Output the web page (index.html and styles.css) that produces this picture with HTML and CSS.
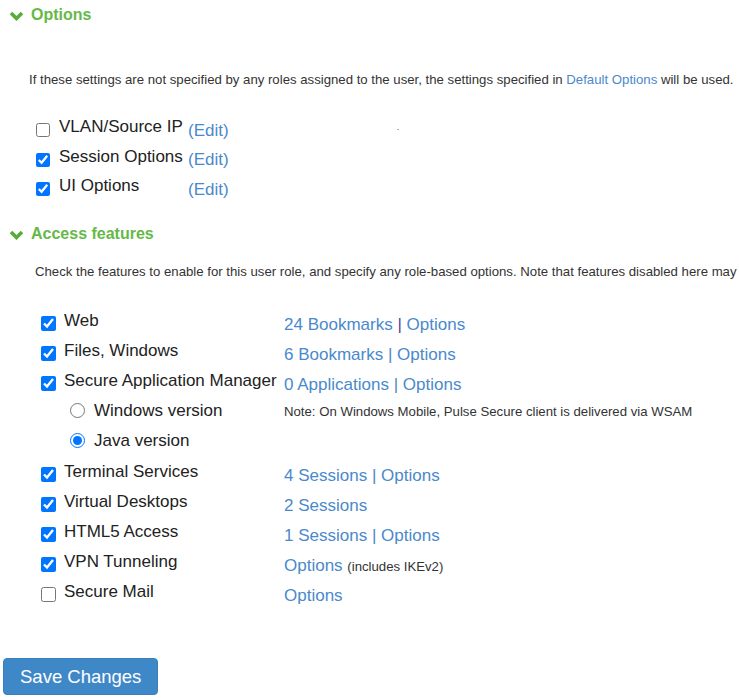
FILE: index.html
```html
<!DOCTYPE html>
<html lang="en">
<head>
<meta charset="utf-8">
<title>Role Options</title>
<link rel="stylesheet" href="styles.css">
</head>
<body>
<div class="page">
  <div class="section-title">
    <svg class="chev" viewBox="0 0 15 10" width="15" height="10"><polyline points="2,2 7.5,7.5 13,2" fill="none" stroke="#5aac3a" stroke-width="3.6" stroke-linejoin="miter"/></svg>
    <span>Options</span>
  </div>
  <p class="note opt-note">If these settings are not specified by any roles assigned to the user, the settings specified in <a href="#" class="link">Default Options</a> will be used.</p>
  <div class="opt-list">
    <div class="opt-row">
      <input type="checkbox" class="cb">
      <span class="opt-label">VLAN/Source IP</span>
      <a href="#" class="link edit">(Edit)</a>
      <span class="stray">.</span>
    </div>
    <div class="opt-row">
      <input type="checkbox" class="cb" checked>
      <span class="opt-label">Session Options</span>
      <a href="#" class="link edit">(Edit)</a>
    </div>
    <div class="opt-row">
      <input type="checkbox" class="cb" checked>
      <span class="opt-label">UI Options</span>
      <a href="#" class="link edit">(Edit)</a>
    </div>
  </div>

  <div class="section-title second">
    <svg class="chev" viewBox="0 0 15 10" width="15" height="10"><polyline points="2,2 7.5,7.5 13,2" fill="none" stroke="#5aac3a" stroke-width="3.6" stroke-linejoin="miter"/></svg>
    <span>Access features</span>
  </div>
  <p class="note feat-note">Check the features to enable for this user role, and specify any role-based options. Note that features disabled here may</p>

  <div class="feat-list">
    <div class="feat-row">
      <div class="feat-name"><input type="checkbox" class="fcb" checked><span>Web</span></div>
      <div class="feat-links"><a href="#" class="link">24 Bookmarks</a> <span class="sep visited">|</span> <a href="#" class="link">Options</a></div>
    </div>
    <div class="feat-row">
      <div class="feat-name"><input type="checkbox" class="fcb" checked><span>Files, Windows</span></div>
      <div class="feat-links"><a href="#" class="link">6 Bookmarks</a> <span class="sep">|</span> <a href="#" class="link">Options</a></div>
    </div>
    <div class="feat-row">
      <div class="feat-name"><input type="checkbox" class="fcb" checked><span>Secure Application Manager</span></div>
      <div class="feat-links"><a href="#" class="link">0 Applications</a> <span class="sep">|</span> <a href="#" class="link">Options</a></div>
    </div>
    <div class="feat-row">
      <div class="feat-name sub"><input type="radio" name="ver" class="rb"><span>Windows version</span></div>
      <div class="feat-note-small">Note: On Windows Mobile, Pulse Secure client is delivered via WSAM</div>
    </div>
    <div class="feat-row last-sub">
      <div class="feat-name sub"><input type="radio" name="ver" class="rb" checked><span>Java version</span></div>
      <div></div>
    </div>
    <div class="feat-row">
      <div class="feat-name"><input type="checkbox" class="fcb" checked><span>Terminal Services</span></div>
      <div class="feat-links"><a href="#" class="link">4 Sessions</a> <span class="sep">|</span> <a href="#" class="link">Options</a></div>
    </div>
    <div class="feat-row">
      <div class="feat-name"><input type="checkbox" class="fcb" checked><span>Virtual Desktops</span></div>
      <div class="feat-links"><a href="#" class="link">2 Sessions</a></div>
    </div>
    <div class="feat-row">
      <div class="feat-name"><input type="checkbox" class="fcb" checked><span>HTML5 Access</span></div>
      <div class="feat-links"><a href="#" class="link">1 Sessions</a> <span class="sep">|</span> <a href="#" class="link">Options</a></div>
    </div>
    <div class="feat-row">
      <div class="feat-name"><input type="checkbox" class="fcb" checked><span>VPN Tunneling</span></div>
      <div class="feat-links"><a href="#" class="link">Options</a> <span class="small">(includes IKEv2)</span></div>
    </div>
    <div class="feat-row">
      <div class="feat-name"><input type="checkbox" class="fcb"><span>Secure Mail</span></div>
      <div class="feat-links"><a href="#" class="link">Options</a></div>
    </div>
  </div>

  <button class="btn" type="button">Save Changes</button>
</div>
</body>
</html>
```

FILE: styles.css
```css
html, body {
  margin: 0;
  padding: 0;
  background: #ffffff;
}
body {
  font-family: "Liberation Sans", Arial, sans-serif;
  color: #222222;
  overflow: hidden;
}
.page {
  width: 739px;
}
.link {
  color: #4a89cc;
  text-decoration: none;
}
.section-title {
  display: flex;
  align-items: flex-start;
  padding: 5px 0 0 9px;
  font-size: 16px;
  line-height: 20px;
  font-weight: bold;
  color: #66b948;
}
.section-title.second {
  margin-top: 13px;
}
.chev {
  margin: 6px 7px 0 0;
  flex: none;
}
.note {
  font-size: 13.2px;
  line-height: 16px;
  color: #333333;
  margin: 0;
  white-space: nowrap;
}
.opt-note {
  margin-top: 47px;
  padding-left: 29px;
}
.opt-list {
  margin-top: 29px;
  padding-left: 36px;
}
.opt-row {
  display: flex;
  align-items: flex-start;
  height: 29.5px;
  font-size: 17px;
  line-height: 20px;
}
.cb {
  width: 14px;
  height: 14px;
  margin: 6px 9px 0 0;
  flex: none;
}
.opt-label {
  width: 129px;
  flex: none;
  white-space: nowrap;
}
.edit {
  margin-top: 3.5px;
}
.stray {
  margin-left: 168px;
  font-size: 9px;
  line-height: 20px;
  color: #3a3ad0;
}
.feat-note {
  margin-top: 20px;
  padding-left: 35px;
}
.feat-list {
  margin-top: 31px;
  padding-left: 41px;
}
.feat-row {
  display: grid;
  grid-template-columns: 243px auto;
  height: 30px;
  font-size: 17px;
  line-height: 20px;
}
.feat-row.last-sub {
  height: 31px;
}
.feat-name {
  display: flex;
  align-items: flex-start;
  white-space: nowrap;
}
.feat-name.sub {
  padding-left: 29px;
}
.fcb {
  width: 15px;
  height: 15px;
  margin: 5.5px 8px 0 0;
  flex: none;
}
.rb {
  width: 15px;
  height: 15px;
  margin: 2px 9px 0 0;
  flex: none;
}
.feat-links {
  margin-top: 4px;
  white-space: nowrap;
}
.sep {
  color: #4a89cc;
}
.sep.visited {
  color: #55408e;
}
.small {
  font-size: 13.2px;
  color: #333333;
}
.feat-note-small {
  font-size: 13.2px;
  line-height: 20px;
  margin-top: 1.4px;
  color: #333333;
  white-space: nowrap;
}
.btn {
  display: block;
  margin: 46px 0 0 3px;
  height: 37px;
  padding: 0 16px;
  font-family: "Liberation Sans", Arial, sans-serif;
  font-size: 18.5px;
  line-height: 35px;
  color: #ffffff;
  background: #3f88c8;
  border: 1px solid #3a7fbd;
  border-radius: 4px;
  cursor: pointer;
}
```
